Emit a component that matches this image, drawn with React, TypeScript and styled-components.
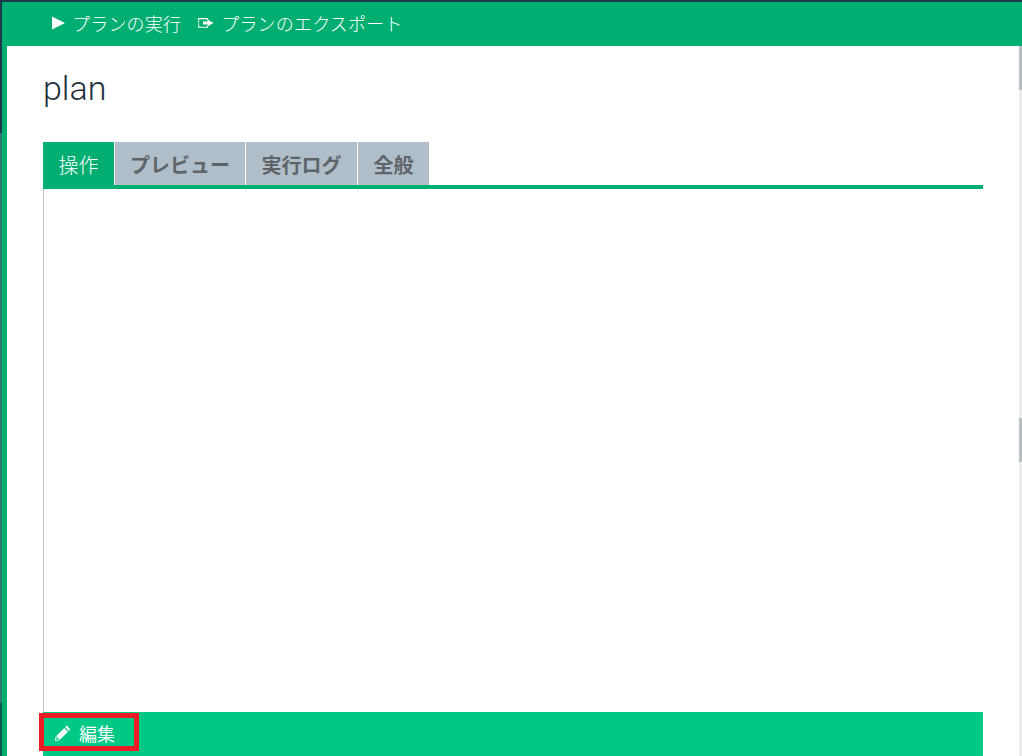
import React from 'react';
import styled, { createGlobalStyle } from 'styled-components';

const GlobalStyle = createGlobalStyle`
  html, body {
    margin: 0;
    padding: 0;
    height: 100%;
    overflow: hidden;
    background: #fff;
  }
  #root {
    height: 100%;
  }
`;

const Frame = styled.div`
  display: flex;
  width: 1022px;
  height: 756px;
  position: relative;
  overflow: hidden;
  font-family: 'Noto Sans CJK JP', 'Noto Sans', sans-serif;
`;

const EdgeStrip = styled.div`
  display: flex;
  flex-direction: column;
  flex: 0 0 2px;
`;

const EdgeSegment = styled.div<{ $h: number; $color: string }>`
  flex: ${p => (p.$h ? `0 0 ${p.$h}px` : '1')};
  background: ${p => p.$color};
`;

const Shell = styled.div`
  display: flex;
  flex-direction: column;
  flex: 1;
  border-top: 2px solid #1d3a4c;
`;

const TopBar = styled.div`
  display: flex;
  align-items: center;
  height: 44px;
  flex: 0 0 44px;
  padding: 0 0 2px 50px;
  box-sizing: border-box;
  background: #00ae72;
  color: #fff;
  font-size: 18px;
  font-weight: 300;
  letter-spacing: 0.2px;
`;

const BarAction = styled.div<{ $gap: number; $mr?: number }>`
  display: flex;
  align-items: center;
  gap: ${p => p.$gap}px;
  margin-right: ${p => p.$mr || 0}px;
`;

const Body = styled.div`
  display: flex;
  flex: 1;
  min-height: 0;
`;

const Rail = styled.div`
  flex: 0 0 5px;
  background: #00ae72;
`;

const Main = styled.div`
  display: flex;
  flex-direction: column;
  flex: 1;
  min-width: 0;
  padding: 0 36px 0 36px;
  background: #fff;
`;

const Title = styled.h1`
  margin: 21px 0 0;
  height: 75px;
  font-family: Roboto, 'Noto Sans', sans-serif;
  font-size: 34px;
  font-weight: 300;
  line-height: 42px;
  color: #22303c;
`;

const TabRow = styled.div`
  display: flex;
  gap: 1px;
  height: 43px;
  flex: 0 0 43px;
  border-bottom: 4px solid #00ae72;
  box-sizing: content-box;
`;

const Tab = styled.div<{ $active?: boolean; $w: number }>`
  display: flex;
  align-items: center;
  justify-content: center;
  box-sizing: border-box;
  padding-top: 2px;
  width: ${p => p.$w}px;
  background: ${p => (p.$active ? '#00ae72' : '#b0bec9')};
  color: ${p => (p.$active ? '#fff' : '#5f6468')};
  font-size: 20px;
  font-weight: ${p => (p.$active ? 300 : 700)};
`;

const TabPanel = styled.div`
  flex: 1;
  border-left: 1px solid #c4c4c4;
`;

const Footer = styled.div`
  display: flex;
  align-items: center;
  gap: 8px;
  height: 44px;
  flex: 0 0 44px;
  padding: 0 0 3px 12px;
  box-sizing: border-box;
  background: #00c985;
  color: #fff;
  font-size: 18px;
  font-weight: 400;
`;

const Highlight = styled.div`
  position: absolute;
  left: 39px;
  top: 713px;
  width: 100px;
  height: 38px;
  box-sizing: border-box;
  border: 5px solid #ed1c24;
`;

const ScrollTrack = styled.div`
  display: flex;
  flex-direction: column;
  flex: 0 0 3px;
  background: #eceeee;
`;

const ScrollThumb = styled.div<{ $mt: number }>`
  flex: 0 0 44px;
  margin-top: ${p => p.$mt}px;
  background: #b8c0c4;
`;

const PlayIcon = () => (
  <svg width="14" height="14" viewBox="0 0 14 14">
    <path d="M0 0.5L13 7L0 13.5Z" fill="#fff" />
  </svg>
);

const ExportIcon = () => (
  <svg width="16" height="10" viewBox="0 0 16 10">
    <path d="M0.6 1V9" stroke="#fff" strokeWidth="1.2" strokeDasharray="1.4 0.8" />
    <path d="M0 0.6H9.5V2.5" fill="none" stroke="#fff" strokeWidth="1.1" />
    <path d="M0 9.2H9.5V7.5" fill="none" stroke="#fff" strokeWidth="1.1" />
    <path d="M5 3.6H10V1.8L15.5 5L10 8.2V6.4H5Z" fill="#fff" />
  </svg>
);

const PencilIcon = () => (
  <svg width="16" height="16" viewBox="0 0 16 16">
    <path d="M11.6 0.6L15.4 4.4L13.9 5.9L10.1 2.1Z" fill="#fff" />
    <path d="M9.3 3L13 6.7L5.2 14.5L1.5 10.8Z" fill="#fff" />
    <path d="M1.2 11.6L4.4 14.8L0.4 15.6Z" fill="none" stroke="#fff" strokeWidth="0.9" />
  </svg>
);

const tabs = [
  { label: '操作', w: 71, active: true },
  { label: 'プレビュー', w: 130 },
  { label: '実行ログ', w: 111 },
  { label: '全般', w: 71 },
];

const App: React.FC = () => {
  return (
    <>
      <GlobalStyle />
      <Frame>
        <EdgeStrip>
          <EdgeSegment $h={133} $color="#1d3a4c" />
          <EdgeSegment $h={0} $color="#2c7a70" />
          <EdgeSegment $h={53} $color="#0f5a50" />
        </EdgeStrip>
        <Shell>
          <TopBar>
            <BarAction $gap={6} $mr={17}>
              <PlayIcon />
              <span>プランの実行</span>
            </BarAction>
            <BarAction $gap={7}>
              <ExportIcon />
              <span>プランのエクスポート</span>
            </BarAction>
          </TopBar>
          <Body>
            <Rail />
            <Main>
              <Title>plan</Title>
              <TabRow>
                {tabs.map(t => (
                  <Tab key={t.label} $active={t.active} $w={t.w}>
                    {t.label}
                  </Tab>
                ))}
              </TabRow>
              <TabPanel />
              <Footer>
                <PencilIcon />
                <span>編集</span>
              </Footer>
            </Main>
            <ScrollTrack>
              <ScrollThumb $mt={0} />
              <ScrollThumb $mt={328} />
            </ScrollTrack>
          </Body>
        </Shell>
        <Highlight />
      </Frame>
    </>
  );
};

export default App;
